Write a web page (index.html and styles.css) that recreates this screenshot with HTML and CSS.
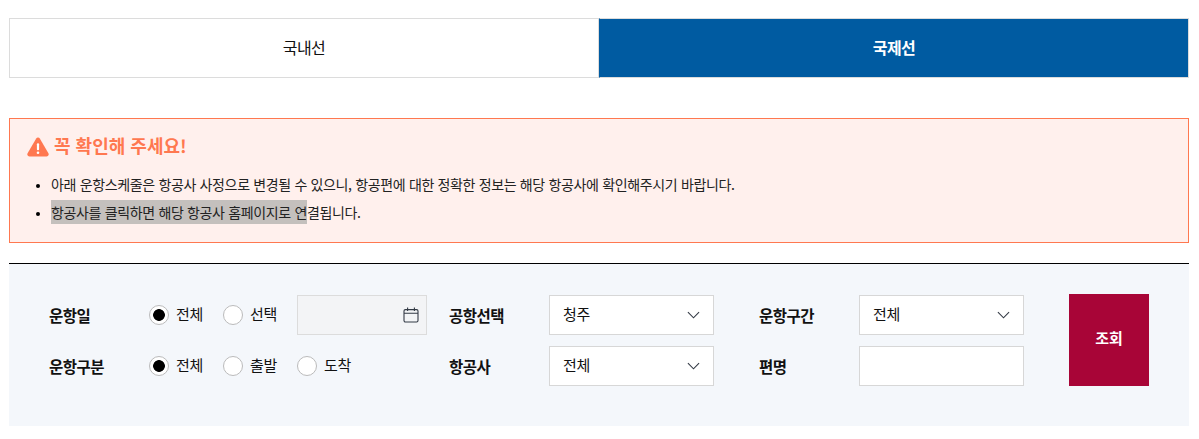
FILE: index.html
```html
<!DOCTYPE html>
<html lang="ko">
<head>
  <meta charset="UTF-8" />
  <title>운항스케줄</title>
  <link rel="stylesheet" href="styles.css">
</head>
<body>

  <!-- Domestic / international tabs -->
  <nav class="tabs">
    <a class="tab" href="#">국내선</a>
    <a class="tab active" href="#">국제선</a>
  </nav>

  <!-- Notice box -->
  <div class="notice">
    <h3 class="notice-title">
      <svg class="notice-icon" viewBox="0 0 22 20" width="22" height="20">
        <path d="M11 .6c-.8 0-1.4.4-1.8 1L.6 16.2c-.9 1.6.2 3.3 1.9 3.3h17c1.7 0 2.8-1.7 1.9-3.3L12.8 1.6c-.4-.6-1-1-1.8-1z" fill="#ff7850"/>
        <rect x="9.9" y="6.2" width="2.2" height="7" rx="1" fill="#fff"/>
        <circle cx="11" cy="15.7" r="1.3" fill="#fff"/>
      </svg>
      꼭 확인해 주세요!
    </h3>
    <ul class="notice-list">
      <li>아래 운항스케줄은 항공사 사정으로 변경될 수 있으니, 항공편에 대한 정확한 정보는 해당 항공사에 확인해주시기 바랍니다.</li>
      <li><span class="selected">항공사를 클릭하면 해당 항공사 홈페이지로 연</span>결됩니다.</li>
    </ul>
  </div>

  <!-- Search form -->
  <form class="search">
    <div class="search-grid">
      <label class="field-label">운항일</label>
      <div class="radios">
        <label class="radio"><input type="radio" name="day" checked><span>전체</span></label>
        <label class="radio"><input type="radio" name="day"><span>선택</span></label>
        <div class="date-box">
          <svg viewBox="0 0 16 16" width="16" height="16" fill="none" stroke="#333a45" stroke-width="1.1">
            <rect x="1" y="2.6" width="14" height="12.4" rx="1.4"/>
            <path d="M1 6.2h14M4.6 .6v3.4M11.4 .6v3.4"/>
          </svg>
        </div>
      </div>
      <label class="field-label">공항선택</label>
      <div class="select">청주
        <svg class="chevron" viewBox="0 0 14 8" width="13" height="8"><path d="M1 1l6 6 6-6" fill="none" stroke="#333a45" stroke-width="1.2"/></svg>
      </div>
      <label class="field-label indent">운항구간</label>
      <div class="select">전체
        <svg class="chevron" viewBox="0 0 14 8" width="13" height="8"><path d="M1 1l6 6 6-6" fill="none" stroke="#333a45" stroke-width="1.2"/></svg>
      </div>

      <label class="field-label">운항구분</label>
      <div class="radios">
        <label class="radio"><input type="radio" name="kind" checked><span>전체</span></label>
        <label class="radio"><input type="radio" name="kind"><span>출발</span></label>
        <label class="radio"><input type="radio" name="kind"><span>도착</span></label>
      </div>
      <label class="field-label">항공사</label>
      <div class="select">전체
        <svg class="chevron" viewBox="0 0 14 8" width="13" height="8"><path d="M1 1l6 6 6-6" fill="none" stroke="#333a45" stroke-width="1.2"/></svg>
      </div>
      <label class="field-label indent">편명</label>
      <input class="text-input" type="text">
    </div>
    <button class="search-btn" type="button">조회</button>
  </form>

</body>
</html>
```

FILE: styles.css
```css
body {
  font-family: 'Noto Sans CJK KR', 'Noto Sans', sans-serif;
  background-color: #fff;
  margin: 0;
  padding: 18px 10px 13px 9px;
  color: #111;
  font-size: 15px;
  letter-spacing: -0.5px;
}

.tabs {
  display: flex;
  height: 60px;
}

.tab {
  flex: 1;
  display: flex;
  align-items: center;
  justify-content: center;
  padding-bottom: 3px;
  border: 1px solid #dcdcdc;
  color: #111;
  font-size: 16px;
  text-decoration: none;
}

.tab.active {
  background-color: #005ba1;
  border-left-color: #005ba1;
  color: #fff;
  font-weight: bold;
}

.notice {
  margin-top: 40px;
  height: 125px;
  box-sizing: border-box;
  background-color: #fff0ed;
  border: 1px solid #ff7850;
  padding: 13px 17px;
}

.notice-title {
  display: flex;
  align-items: center;
  gap: 5px;
  margin: 0;
  height: 26px;
  color: #ff7850;
  font-size: 18px;
  font-weight: bold;
  letter-spacing: 0;
}

.notice-icon {
  margin-top: 3px;
}

.notice-list {
  margin: 12px 0 0;
  padding-left: 24px;
  color: #222;
  font-size: 14px;
  letter-spacing: -0.35px;
  line-height: 28px;
}

.notice-list li::marker {
  font-size: 11px;
  color: #000;
}

.selected {
  display: inline-block;
  line-height: 24px;
  background-color: #c4c0bd;
}

.search {
  display: flex;
  margin-top: 20px;
  height: 163px;
  box-sizing: border-box;
  background-color: #f4f7fb;
  border-top: 1px solid #000;
  padding: 30px 40px 40px;
}

.search-grid {
  display: grid;
  grid-template-columns: 100px 300px 100px 165px 145px 165px;
  grid-template-rows: 40px 40px;
  row-gap: 11px;
  margin-top: 1px;
}

.field-label {
  align-self: center;
  font-size: 15.5px;
  font-weight: bold;
}

.field-label.indent {
  padding-left: 45px;
}

.radios {
  display: flex;
  align-items: center;
}

.radio {
  display: flex;
  align-items: center;
  width: 74px;
  gap: 7px;
  letter-spacing: -0.2px;
}

.radio span {
  margin-top: -3px;
}

.radio input {
  appearance: none;
  width: 20px;
  height: 20px;
  margin: 0;
  border: 1px solid #bbb;
  border-radius: 50%;
  background-color: #fff;
}

.radio input:checked {
  background: radial-gradient(circle, #000 0, #000 5.5px, #fff 6.2px);
}

.date-box {
  width: 130px;
  height: 40px;
  box-sizing: border-box;
  display: flex;
  align-items: center;
  justify-content: flex-end;
  padding-right: 7px;
  background-color: #f3f4f6;
  border: 1px solid #dcdcdc;
}

.select {
  display: flex;
  align-items: center;
  justify-content: space-between;
  box-sizing: border-box;
  height: 40px;
  padding: 0 13px 3px 13px;
  background-color: #fff;
  border: 1px solid #d7d7d7;
  letter-spacing: -0.2px;
}

.chevron {
  margin-top: 3px;
}

.text-input {
  box-sizing: border-box;
  height: 40px;
  width: 165px;
  margin: 0;
  background-color: #fff;
  border: 1px solid #d7d7d7;
}

.search-btn {
  margin-left: 45px;
  width: 80px;
  height: 92px;
  padding: 0 0 6px;
  background-color: #a80537;
  color: #fff;
  border: none;
  font-family: inherit;
  font-size: 15px;
  font-weight: bold;
}
```
